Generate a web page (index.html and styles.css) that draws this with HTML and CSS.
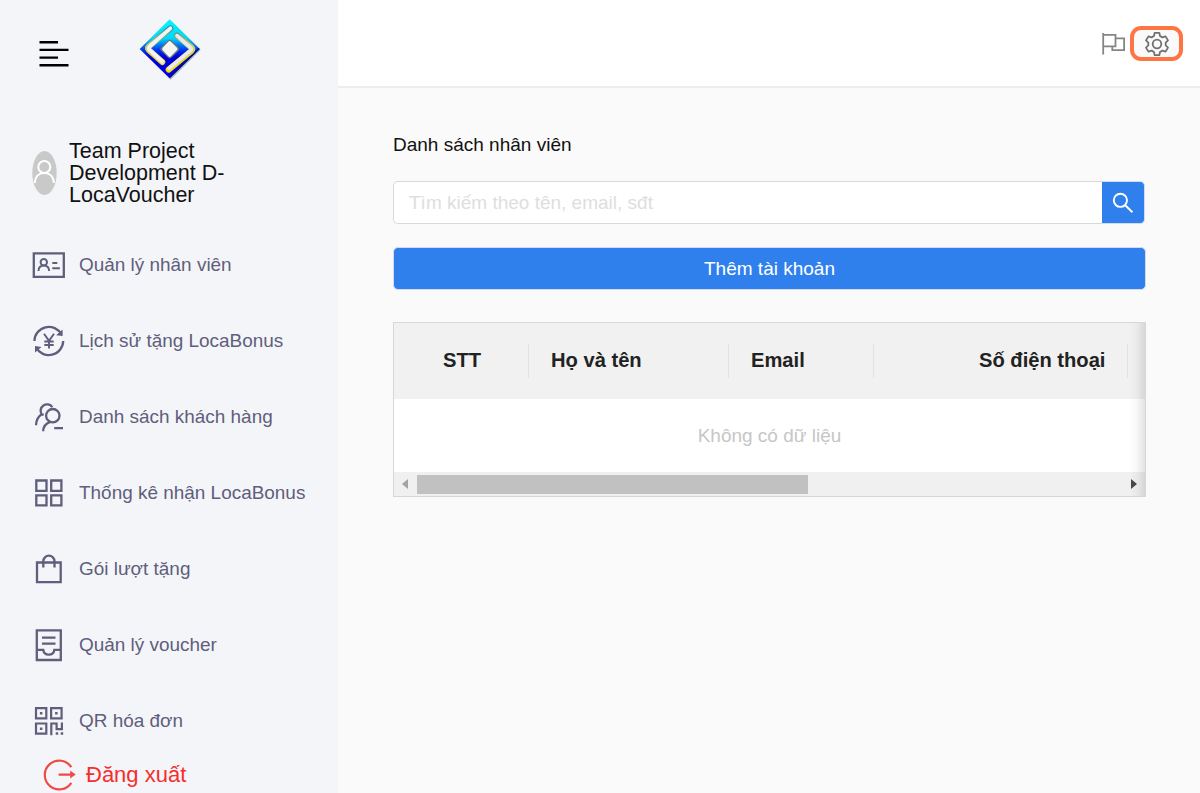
FILE: index.html
```html
<!DOCTYPE html>
<html lang="vi">
<head>
<meta charset="utf-8">
<title>Danh sách nhân viên</title>
<link rel="stylesheet" href="styles.css">
</head>
<body>
<div class="app">
  <aside class="sidebar">
    <div class="brand">
      <svg class="burger" width="30" height="28" viewBox="0 0 30 28" fill="none" stroke="#000" stroke-width="2.4"><path d="M.5 2.200h18.500M.5 9.900h29M.5 17.600h18.500M.5 25.300h29"/></svg>
      <svg class="logo" width="64" height="64" viewBox="24 24 192 192">
        <defs>
          <linearGradient id="face" x1="0" y1="0" x2="0" y2="1">
            <stop offset="0" stop-color="#00f8ff"/><stop offset="0.32" stop-color="#00d8fa"/><stop offset="0.54" stop-color="#0028ee"/><stop offset="0.64" stop-color="#0000dc"/><stop offset="1" stop-color="#0000f0"/>
          </linearGradient>
          <linearGradient id="edge" x1="0" y1="0" x2="0" y2="1">
            <stop offset="0" stop-color="#3f8f94"/><stop offset="0.45" stop-color="#d8d060"/><stop offset="1" stop-color="#ffe000"/>
          </linearGradient>
        </defs>
        <path d="M122 32L212 119L122 209L33 119Z" fill="#536486" opacity=".45"/>
        <path d="M119 28L209 117L119 205L29 117Z" fill="url(#face)"/>
        <path d="M205 113L209 117L119 205L117 202L202 117Z" fill="#00136f"/>
        <g fill="none" stroke-linecap="round" stroke-linejoin="round">
          <path d="M121 55L58 108Q50 115 57 121L97 156M141 76L184 112Q190 117 184 123L116 179" stroke="url(#edge)" stroke-width="18"/>
          <path d="M121 55L60 108Q53 115 59 120L97 155" stroke="#f2f3f6" stroke-width="11.500"/>
          <path d="M141 77L181 112Q187 117 181 122L117 175" stroke="#e9eaf0" stroke-width="11"/>
          <path d="M119 98L139 117L119 136L100 117Z" fill="#65757d" stroke="#65757d" stroke-width="17"/>
          <path d="M119 99L137 117L119 135L102 117Z" fill="#f5f6f4" stroke="#f5f6f4" stroke-width="11"/>
        </g>
      </svg>
    </div>
    <div class="profile">
      <svg class="avatar" width="25" height="44" viewBox="0 0 25 44"><ellipse cx="12.5" cy="22" rx="12.2" ry="22" fill="#c9c9ca"/><g fill="none" stroke="#fff" stroke-width="2"><circle cx="12.3" cy="16" r="6"/><path d="M2.8 32C3 25.500 7 21.900 12.300 21.900S21.600 25.500 21.900 32"/></g></svg>
      <div class="profile-name">Team Project Development D-LocaVoucher</div>
    </div>
    <nav class="menu">
      <a class="item"><svg class="icon" viewBox="0 0 34 34"><path d="M1.800 5.400h30v23.500H1.800z"/><g stroke-width="2"><circle cx="11.800" cy="14.200" r="3.200"/><path d="M6.500 23c0-3.400 2-5.600 5.300-5.600s5.300 2.200 5.300 5.600M20.300 15h5M20.300 20.300h7.600"/></g></svg><span>Quản lý nhân viên</span></a>
      <a class="item"><svg class="icon" viewBox="0 0 34 34"><path d="M2.400 17A14.400 14.400 0 0 1 29.500 10.500M31.200 17A14.400 14.400 0 0 1 4.100 23.500"/><path d="M30.600 5.500v6.600l-6.500-.9zM3 28.500v-6.600l6.500 1z" fill="#5f5e7c" stroke="none"/><path d="M12 9.700l5 7.200 5-7.200M17 16.900v7.500M12.300 17.500h9.400M12.300 21h9.400" stroke-width="1.900"/></svg><span>Lịch sử tặng LocaBonus</span></a>
      <a class="item"><svg class="icon" viewBox="0 0 34 34"><circle cx="20.800" cy="15.700" r="6.700"/><path d="M20.300 7.200A6.300 6.300 0 1 0 9.700 14.300C6.200 16.500 4.200 20.500 4 25.200M9.700 14.300l2 .6M18.400 21.800c-4.500 1.500-7.200 5-7.200 9.500M22.200 28.200H31"/></svg><span>Danh sách khách hàng</span></a>
      <a class="item"><svg class="icon" viewBox="0 0 34 34"><path d="M4.300 4.500h10.200v10.300H4.300zM19.200 4.500h10.200v10.300H19.200zM4.300 19.300h10.200v10H4.300zM19.200 19.300h10.200v10H19.200z"/></svg><span>Thống kê nhận LocaBonus</span></a>
      <a class="item"><svg class="icon" viewBox="0 0 34 34"><path d="M5 10.500h23.700v19.700H5zM11.300 15.500V9.300a5.600 5.600 0 0 1 11.200 0v6.200"/></svg><span>Gói lượt tặng</span></a>
      <a class="item"><svg class="icon" viewBox="0 0 34 34"><path d="M4.800 2.300h24v29.700h-24zM4.800 21.900h6.500c.3 2.900 2.500 4.800 5.500 4.800s5.200-1.900 5.500-4.800h6.500M10 9.700h13.500M10 15.700h13.500"/></svg><span>Quản lý voucher</span></a>
      <a class="item"><svg class="icon" viewBox="0 0 34 34"><path d="M4 4.200h10.300v10.200H4zM19.100 4.200h10.500v10.200H19.100zM4 19.500h10.300v10.200H4zM19.300 31.200V19.500h5.300v5.600h5.300v-6.600" stroke-width="2.200"/><path d="M7.900 8.100h2.500v2.500H7.900zM23.100 8.100h2.500v2.500h-2.500zM7.900 23.400h2.500v2.500H7.900zM23.700 28.200h2.500v2.500h-2.500zM28.700 28.200h2.500v2.500h-2.500z" fill="#5f5e7c" stroke="none"/></svg><span>QR hóa đơn</span></a>
    </nav>
    <a class="logout">
      <svg width="33" height="32" viewBox="0 0 33 32" fill="none" stroke="#f04a46" stroke-width="2.200"><path d="M28.300 8.200A14.400 14.400 0 1 0 28.300 23.800M15.600 15.600h13"/><path d="M27.200 11.600l5.500 4-5.500 4z" fill="#f04a46" stroke="none"/></svg>
      <span>Đăng xuất</span>
    </a>
  </aside>
  <main class="main">
    <header class="topbar">
      <svg width="24" height="24" viewBox="0 0 24 24" fill="none" stroke="#858585" stroke-width="1.800"><path d="M1.200 1v21.500M1.200 2.900h12.300v11.400H1.200M13.500 6.400h8.600v11.800H10.300v-3.900"/></svg>
      <span class="settings">
        <svg width="26" height="26" viewBox="0 0 26 26" fill="none" stroke="#717171" stroke-width="1.800" stroke-linejoin="round"><path d="M10.700 1.800h4.600l.7 3.200 2.400 1.400 3.200-1 2.400 4-2.300 2.200v2.800l2.300 2.200-2.400 4-3.200-1-2.400 1.400-.7 3.200h-4.600L10 21l-2.400-1.400-3.200 1-2.400-4 2.300-2.200v-2.800L2 9.400l2.400-4 3.200 1L10 5z"/><circle cx="13" cy="13" r="4.300"/></svg>
      </span>
    </header>
    <section class="content">
      <h1 class="title">Danh sách nhân viên</h1>
      <div class="search">
        <input class="search-input" type="text" placeholder="Tìm kiếm theo tên, email, sđt">
        <button class="search-button" aria-label="Tìm kiếm"><svg width="22" height="22" viewBox="0 0 22 22" fill="none" stroke="#fff" stroke-width="1.900"><circle cx="8.400" cy="8.300" r="6.600"/><path d="M13 13l7.400 7.200"/></svg></button>
      </div>
      <button class="add">Thêm tài khoản</button>
      <div class="table">
        <div class="head">
          <div class="cell stt">STT</div>
          <div class="cell name">Họ và tên</div>
          <div class="cell email">Email</div>
          <div class="cell phone">Số điện thoại</div>
        </div>
        <div class="empty">Không có dữ liệu</div>
        <div class="scrollbar">
          <svg width="22" height="24" viewBox="0 0 22 24"><path d="M14 7v10l-6-5z" fill="#a3a3a3"/></svg>
          <div class="track"><div class="thumb"></div></div>
          <svg width="22" height="24" viewBox="0 0 22 24"><path d="M8 7v10l6-5z" fill="#484848"/></svg>
        </div>
      </div>
    </section>
  </main>
</div>
</body>
</html>
```

FILE: styles.css
```css
* { box-sizing: border-box; }
body { margin: 0; font-family: "Liberation Sans", Arial, sans-serif; background: #fafafa; color: #111; }
.app { display: flex; width: 1200px; height: 793px; overflow: hidden; }
.sidebar { width: 338px; flex: none; background: #f4f5f8; }
.brand { display: flex; height: 130px; padding: 18px 0 0 39px; gap: 69px; }
.burger { margin-top: 22px; }
.logo { flex: none; }
.profile { display: flex; align-items: center; height: 97px; padding: 0 0 11px 32px; gap: 12px; }
.avatar { flex: none; }
.profile-name { width: 180px; padding-top: 2px; font-size: 21.500px; line-height: 21.700px; }
.menu { display: flex; flex-direction: column; }
.item { display: flex; align-items: center; height: 76px; padding-left: 32px; gap: 13px; font-size: 18.950px; color: #5f5e7c; white-space: nowrap; }
.icon { width: 34px; height: 34px; flex: none; fill: none; stroke: #5f5e7c; stroke-width: 2.300; }
.logout { display: flex; align-items: center; height: 32px; padding-left: 43px; gap: 10px; font-size: 22px; color: #f62d2d; }
.main { flex: 1; }
.topbar { display: flex; align-items: flex-start; justify-content: flex-end; height: 88px; padding: 26px 17px 0 0; gap: 4px; background: #fff; border-bottom: 2px solid #ededed; }
.topbar > svg { margin-top: 6px; }
.settings { display: flex; align-items: center; justify-content: center; width: 53px; height: 35px; border: 4px solid #ff7443; border-radius: 11px; background: #fafafa; }
.content { padding: 45px 54px 0 55px; }
.title { margin: 0; font-size: 19px; line-height: 24px; font-weight: 400; }
.search { display: flex; width: 752px; height: 43px; margin-top: 24px; }
.search-input { flex: 1; min-width: 0; border: 1px solid #d9d9d9; border-right: 0; border-radius: 5px 0 0 5px; padding: 0 15px; background: #fff; font: 19px "Liberation Sans", Arial, sans-serif; }
.search-input::placeholder { color: #dedede; }
.search-button { display: flex; align-items: center; justify-content: center; width: 43px; padding: 0; border: 1px solid #d3dcec; border-left: 0; border-radius: 0 5px 5px 0; background: #2f80ed; }
.add { display: block; width: 753px; height: 43px; margin-top: 23px; padding: 0; border: 1px solid #d3dcec; border-radius: 5px; background: #2f80ed; color: #fff; font: 19px "Liberation Sans", Arial, sans-serif; }
.table { width: 753px; height: 175px; margin-top: 32px; border: 1px solid #d7d7d7; background: #fff; position: relative; }
.table::after { content: ""; position: absolute; inset: 0 0 0 auto; width: 16px; background: linear-gradient(to right, transparent, rgba(0,0,0,.03) 50%, rgba(0,0,0,.11)); }
.head { display: flex; align-items: center; height: 76px; background: #f1f1f1; font-size: 20.150px; font-weight: 700; color: #222; }
.cell { height: 34px; line-height: 32px; border-right: 1px solid #e2e2e2; white-space: nowrap; }
.stt { width: 135px; padding-left: 49px; }
.name { width: 200px; padding-left: 22px; }
.email { width: 145px; padding-left: 22px; }
.phone { width: 254px; padding-left: 105px; }
.empty { height: 73px; line-height: 73px; text-align: center; font-size: 19px; color: #c6c6c6; }
.scrollbar { display: flex; height: 24px; background: #f0f0f0; }
.track { flex: 1; padding: 3px 0 2px 1px; }
.thumb { width: 391px; height: 19px; background: #c1c1c1; }
```
